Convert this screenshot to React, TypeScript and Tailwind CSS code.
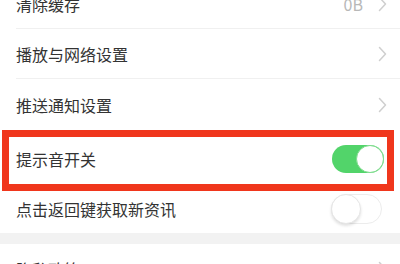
import React from "react"

const font = { fontFamily: '"Noto Sans CJK SC", "Noto Sans", sans-serif' }

function Chevron() {
  return (
    <svg width="9" height="16" viewBox="0 0 9 16" className="shrink-0">
      <polyline points="1.5,1.5 7.5,8 1.5,14.5" fill="none" stroke="#cfcfcf" strokeWidth="1.5" strokeLinecap="round" strokeLinejoin="round" />
    </svg>
  )
}

function Toggle({ on }: { on: boolean }) {
  if (on) {
    return (
      <div className="relative h-[28px] w-[52px] rounded-full bg-[#52d46a]">
        <div className="absolute right-0 top-0 h-[28px] w-[28px] rounded-full border border-[#7fdc8e] bg-white" />
      </div>
    )
  }
  return (
    <div className="relative h-[30px] w-[51px] rounded-full border border-[#ececec] bg-white">
      <div className="absolute left-[-1px] top-[-1px] h-[30px] w-[30px] rounded-full border border-[#e6e6e6] bg-white shadow-[0_2px_3px_rgba(0,0,0,0.12)]" />
    </div>
  )
}

export default function App() {
  return (
    <div className="h-[264px] w-[400px] overflow-hidden bg-white text-[16px] text-[#333]" style={font}>
      <div className="-mt-[21px]">
        <div className="ml-[16px] flex h-[50px] items-center justify-between border-b border-[#f0f0f0] pr-[13px]">
          <span>清除缓存</span>
          <div className="flex items-center gap-[15px]">
            <span className="text-[#b8b8b8]">0B</span>
            <Chevron />
          </div>
        </div>
        <div className="ml-[16px] flex h-[50px] items-center justify-between border-b border-[#f0f0f0] pr-[13px]">
          <span>播放与网络设置</span>
          <Chevron />
        </div>
        <div className="ml-[16px] flex h-[51px] items-center justify-between pr-[13px]">
          <span>推送通知设置</span>
          <Chevron />
        </div>
        <div className="ml-[2px] flex h-[61px] w-[392px] items-center justify-between border-[7px] border-[#f0361c] pb-[4px] pl-[7px] pr-[3px]">
          <span>提示音开关</span>
          <Toggle on />
        </div>
        <div className="flex h-[36px] items-center justify-between pl-[16px] pr-[18px]">
          <span>点击返回键获取新资讯</span>
          <Toggle on={false} />
        </div>
        <div className="mt-[6px] h-[11px] bg-[#f2f2f2]" />
        <div className="flex h-[50px] items-center justify-between pl-[16px] pr-[13px]">
          <span>隐私政策</span>
          <Chevron />
        </div>
      </div>
    </div>
  )
}
